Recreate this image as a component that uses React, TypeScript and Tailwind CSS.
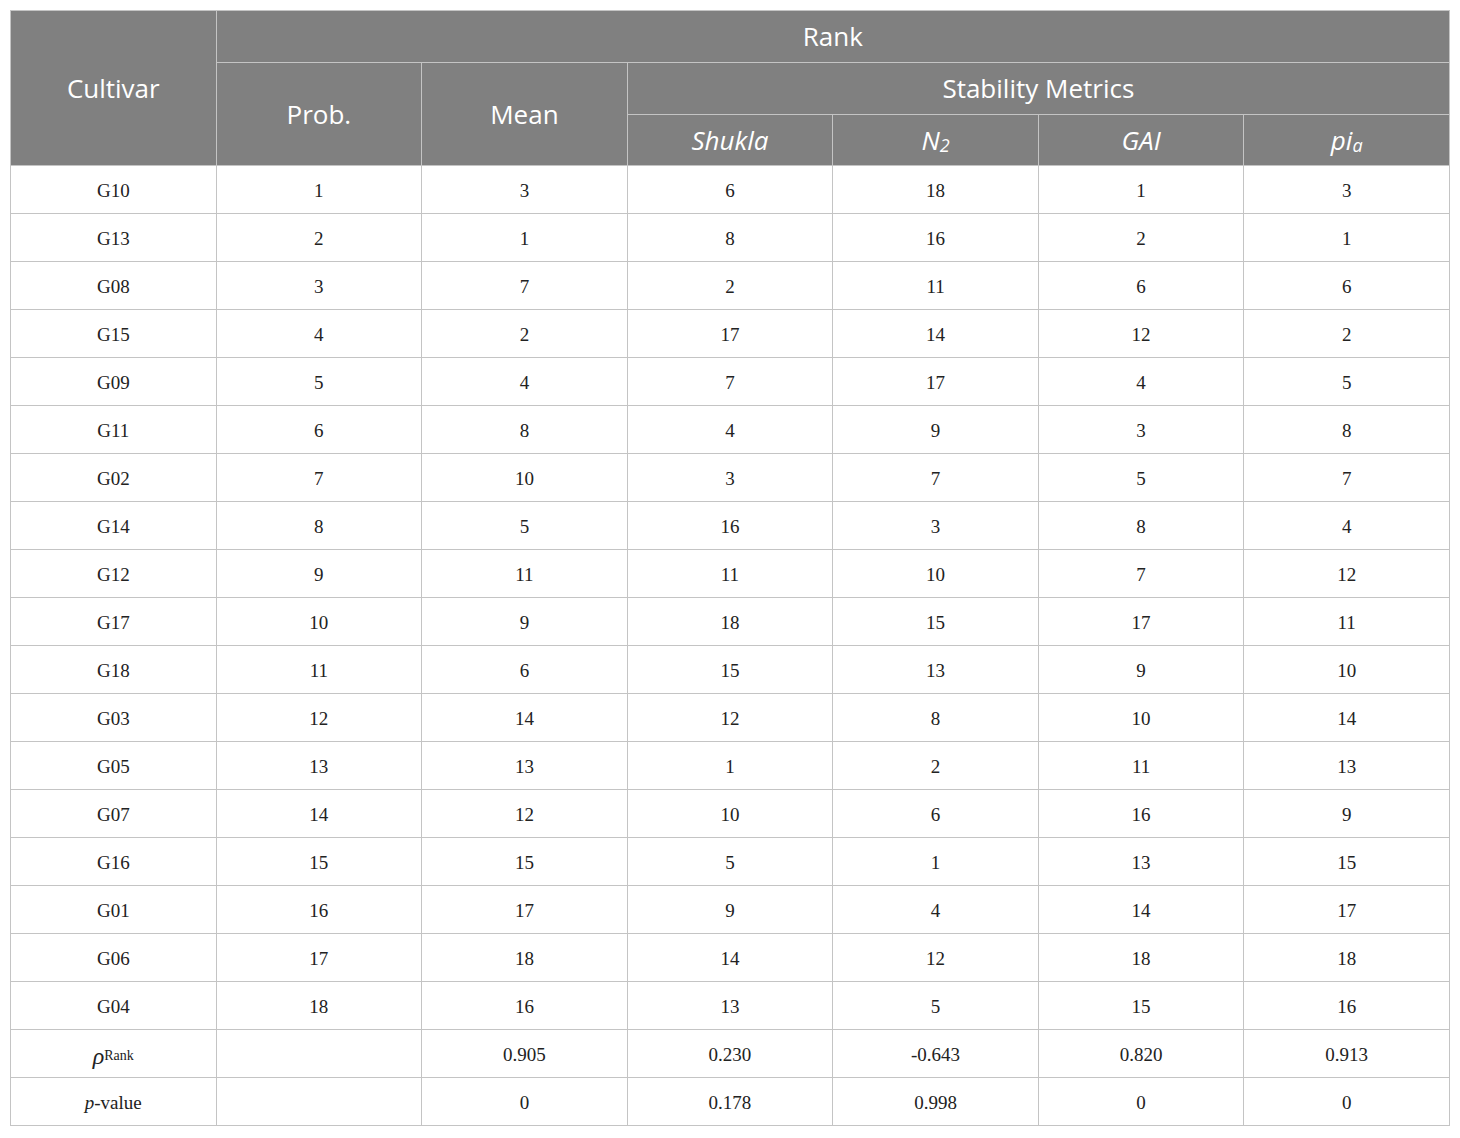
const rows: [string, string, string, string, string, string, string][] = [
    ['G10', '1', '3', '6', '18', '1', '3'],
    ['G13', '2', '1', '8', '16', '2', '1'],
    ['G08', '3', '7', '2', '11', '6', '6'],
    ['G15', '4', '2', '17', '14', '12', '2'],
    ['G09', '5', '4', '7', '17', '4', '5'],
    ['G11', '6', '8', '4', '9', '3', '8'],
    ['G02', '7', '10', '3', '7', '5', '7'],
    ['G14', '8', '5', '16', '3', '8', '4'],
    ['G12', '9', '11', '11', '10', '7', '12'],
    ['G17', '10', '9', '18', '15', '17', '11'],
    ['G18', '11', '6', '15', '13', '9', '10'],
    ['G03', '12', '14', '12', '8', '10', '14'],
    ['G05', '13', '13', '1', '2', '11', '13'],
    ['G07', '14', '12', '10', '6', '16', '9'],
    ['G16', '15', '15', '5', '1', '13', '15'],
    ['G01', '16', '17', '9', '4', '14', '17'],
    ['G06', '17', '18', '14', '12', '18', '18'],
    ['G04', '18', '16', '13', '5', '15', '16'],
];

const th = 'border border-[#c4c4c4] font-normal text-white text-center align-middle';
const td = 'border border-[#c4c4c4] text-center align-middle pt-[4px]';

const App = () => {
    return (
        <div className="min-h-screen bg-white pt-[10px] pl-[10px]">
            <table className="w-[1440px] table-fixed border-collapse font-['Liberation_Serif',serif] text-[19px] text-[#222]">
                <thead className="bg-[#808080] font-['Open_Sans',sans-serif] text-[26px]">
                    <tr className="h-[52px]">
                        <th rowSpan={3} className={th}>Cultivar</th>
                        <th colSpan={6} className={th}>Rank</th>
                    </tr>
                    <tr className="h-[52px]">
                        <th rowSpan={2} className={th}>Prob.</th>
                        <th rowSpan={2} className={th}>Mean</th>
                        <th colSpan={4} className={th}>Stability Metrics</th>
                    </tr>
                    <tr className="h-[51px]">
                        <th className={th + ' italic'}>Shukla</th>
                        <th className={th + ' italic'}>
                            N<sub className="text-[18px] italic relative top-[2px]">2</sub>
                        </th>
                        <th className={th + ' italic'}>GAI</th>
                        <th className={th + ' italic'}>
                            pi<sub className="text-[18px] italic relative top-[2px]">a</sub>
                        </th>
                    </tr>
                </thead>
                <tbody>
                    {rows.map((r) => (
                        <tr key={r[0]} className="h-[48px]">
                            {r.map((c, i) => (
                                <td key={i} className={td}>{c}</td>
                            ))}
                        </tr>
                    ))}
                    <tr className="h-[48px]">
                        <td className={td}>
                            <span className="italic text-[24px]">ρ</span>
                            <sup className="text-[14px] relative -top-[4px]">Rank</sup>
                        </td>
                        <td className={td}></td>
                        <td className={td}>0.905</td>
                        <td className={td}>0.230</td>
                        <td className={td}>-0.643</td>
                        <td className={td}>0.820</td>
                        <td className={td}>0.913</td>
                    </tr>
                    <tr className="h-[48px]">
                        <td className={td}>
                            <span className="italic">p</span>-value
                        </td>
                        <td className={td}></td>
                        <td className={td}>0</td>
                        <td className={td}>0.178</td>
                        <td className={td}>0.998</td>
                        <td className={td}>0</td>
                        <td className={td}>0</td>
                    </tr>
                </tbody>
            </table>
        </div>
    );
};

export default App;
